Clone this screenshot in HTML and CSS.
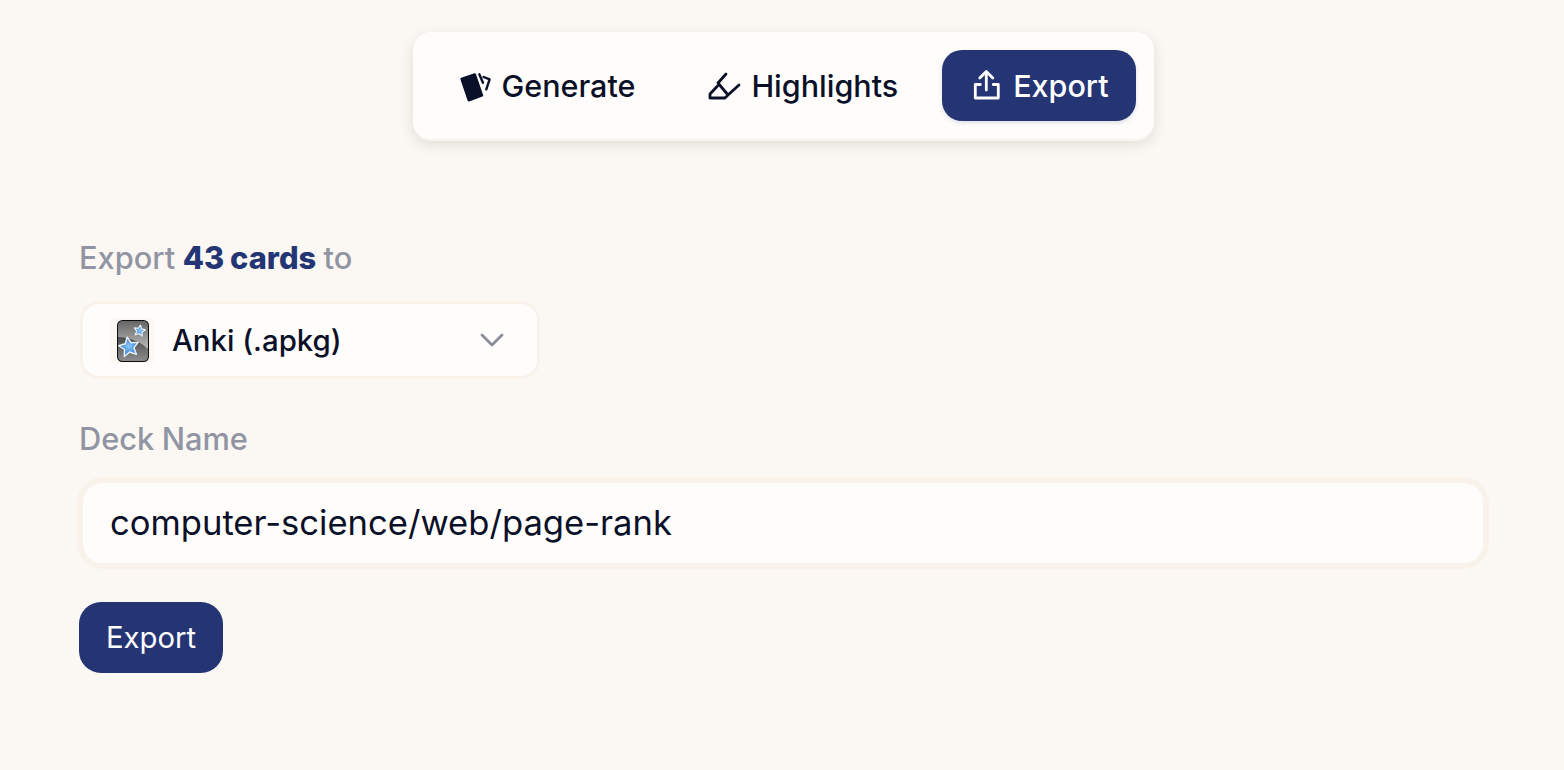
FILE: index.html
```html
<!DOCTYPE html>
<html lang="en">
<head>
<meta charset="utf-8">
<title>Export</title>
<link rel="stylesheet" href="styles.css">
</head>
<body>
<nav class="tabs-wrap">
  <div class="tabs">
    <a class="tab">
      <svg class="tab-icon" viewBox="0 0 40 40"><path class="fill card" d="M5.600 13 18.800 8.400 26 29.400 12.800 34.300Z"/><path class="line thin" d="m23.300 8.300 3.700 8.400M27.600 11l6 2.300-3.300 10"/></svg>
      <span>Generate</span>
    </a>
    <a class="tab">
      <svg class="tab-icon" viewBox="0 0 40 40"><path class="line" d="M21 8 13 17l10 12 11-10M12.500 20 5 28v4h15l3-3"/></svg>
      <span>Highlights</span>
    </a>
    <a class="tab tab-active">
      <svg class="tab-icon" viewBox="0 0 40 40"><path class="line" d="M19.300 24V6M12.800 12l6.500-6.500 6.500 6.500M13.300 18.500h-5V32h23V18.500h-5"/></svg>
      <span>Export</span>
    </a>
  </div>
</nav>
<main class="form">
  <p class="label">Export <strong>43 cards</strong> to</p>
  <div class="select">
    <span class="anki">
      <svg viewBox="0 0 44 45" width="44" height="45">
        <defs>
          <linearGradient id="top" x1="0" y1="0" x2="0" y2="1"><stop offset="0" stop-color="#666"/><stop offset="1" stop-color="#bbb"/></linearGradient>
          <linearGradient id="bot" x1="0" y1="0" x2="0" y2="1"><stop offset="0" stop-color="#222"/><stop offset="1" stop-color="#8c8c8c"/></linearGradient>
          <radialGradient id="star"><stop offset="0" stop-color="#8cc6f4"/><stop offset="1" stop-color="#2f80d8"/></radialGradient>
          <clipPath id="clip"><rect x="8" y="3" width="30" height="40" rx="4.500"/></clipPath>
        </defs>
        <rect x="7" y="2" width="32" height="42" rx="5.500" fill="#0d0d0d"/>
        <g clip-path="url(#clip)">
          <rect x="8" y="3" width="30" height="40" fill="url(#bot)"/>
          <path d="M8 3h30v28C32 25 20 19 8 19Z" fill="url(#top)"/>
        </g>
        <path class="star-small" d="m29.500 7 1.700 3.500 3.900.4-2.900 2.700.8 3.900-3.500-2-3.500 2 .8-3.900-2.900-2.700 3.900-.4Z" fill="url(#star)"/>
        <path class="star-big" d="m19 19 3 6.200 6.900.8-5.100 4.700 1.400 6.800-6.200-3.400-6.100 3.400 1.400-6.800-5.100-4.700 6.900-.8Z" fill="url(#star)"/>
      </svg>
    </span>
    <span class="select-text">Anki (.apkg)</span>
    <svg class="chevron" viewBox="0 0 24 14" width="24" height="14"><path d="m2 2 10 10L22 2"/></svg>
  </div>
  <label class="label deck-label" for="deck">Deck Name</label>
  <input class="input" id="deck" type="text" value="computer-science/web/page-rank">
  <button class="submit" type="button">Export</button>
</main>
</body>
</html>
```

FILE: styles.css
```css
* {
  box-sizing: border-box;
}

html,
body {
  margin: 0;
  height: 100%;
}

body {
  background: #fbf8f4;
  color: #0b1029;
  font-family: Inter, "Liberation Sans", sans-serif;
  overflow: hidden;
}

.tabs-wrap {
  display: flex;
  justify-content: center;
  padding: 32px 0 0 3px;
}

.tabs {
  display: flex;
  gap: 18px;
  padding: 18px;
  background: #fffdfb;
  border-radius: 18px;
  box-shadow: 0 2px 0 #f9f3ec, 0 5px 14px rgba(60, 50, 40, 0.14);
}

.tab {
  display: flex;
  align-items: center;
  gap: 5px;
  height: 71px;
  padding: 0 27px 0 25px;
  border-radius: 20px;
  font-size: 30.500px;
  font-weight: 550;
  color: #0b1029;
}

.tab + .tab {
  gap: 6px;
  padding-right: 26px;
}

.tab-active.tab-active {
  padding-right: 27px;
  background: #253574;
  color: #fff;
  box-shadow: 0 2px 4px rgba(37, 53, 116, 0.15);
}

.tab-icon {
  width: 40px;
  height: 40px;
  flex: none;
}

.fill {
  fill: currentColor;
}

.card {
  stroke: currentColor;
  stroke-width: 2.400;
  stroke-linejoin: round;
}

.line {
  fill: none;
  stroke: currentColor;
  stroke-width: 2.800;
  stroke-linecap: round;
  stroke-linejoin: round;
}

.thin {
  stroke-width: 2.400;
}

.star-small,
.star-big {
  stroke: #e8f1fa;
  stroke-linejoin: round;
}

.star-small {
  stroke-width: 1.200;
  transform: rotate(10deg);
  transform-origin: 29.500px 13px;
}

.star-big {
  stroke-width: 1.400;
  transform: rotate(-10deg);
  transform-origin: 19px 30px;
}

.form {
  display: flex;
  flex-direction: column;
  align-items: flex-start;
  padding: 102px 79px 0;
}

.label {
  margin: 0;
  font-size: 30.800px;
  line-height: 34px;
  font-weight: 500;
  word-spacing: -0.800px;
  color: #9195a3;
}

.label strong {
  font-weight: 800;
  color: #243573;
}

.select {
  display: flex;
  align-items: center;
  width: 454px;
  height: 72px;
  margin: 29px 0 0 4px;
  padding: 0 33px 0 27px;
  background: #fffdfb;
  border-radius: 16px;
  box-shadow: 0 0 0 3px #f9f2eb;
  font-size: 29.400px;
  font-weight: 500;
}

.anki {
  display: flex;
  flex: none;
  background: #fbf7f2;
  border-radius: 3px;
}

.select-text {
  flex: 1;
  margin-left: 18px;
}

.chevron {
  flex: none;
  fill: none;
  stroke: #8a8c99;
  stroke-width: 2.800;
  stroke-linecap: round;
  stroke-linejoin: round;
}

.deck-label {
  margin-top: 46px;
}

.input {
  align-self: stretch;
  height: 80px;
  margin: 27px 2px 0 4px;
  padding: 0 27px 2px;
  border: 0;
  outline: 0;
  background: #fffdfb;
  border-radius: 20px;
  box-shadow: 0 0 0 6px #f9f2eb;
  color: #0b1029;
  font-family: inherit;
  font-size: 34.600px;
}

.submit {
  width: 144px;
  height: 71px;
  margin-top: 39px;
  padding: 0;
  border: 0;
  background: #253574;
  border-radius: 22px;
  color: #fff;
  font-family: inherit;
  font-size: 29.300px;
}
```
